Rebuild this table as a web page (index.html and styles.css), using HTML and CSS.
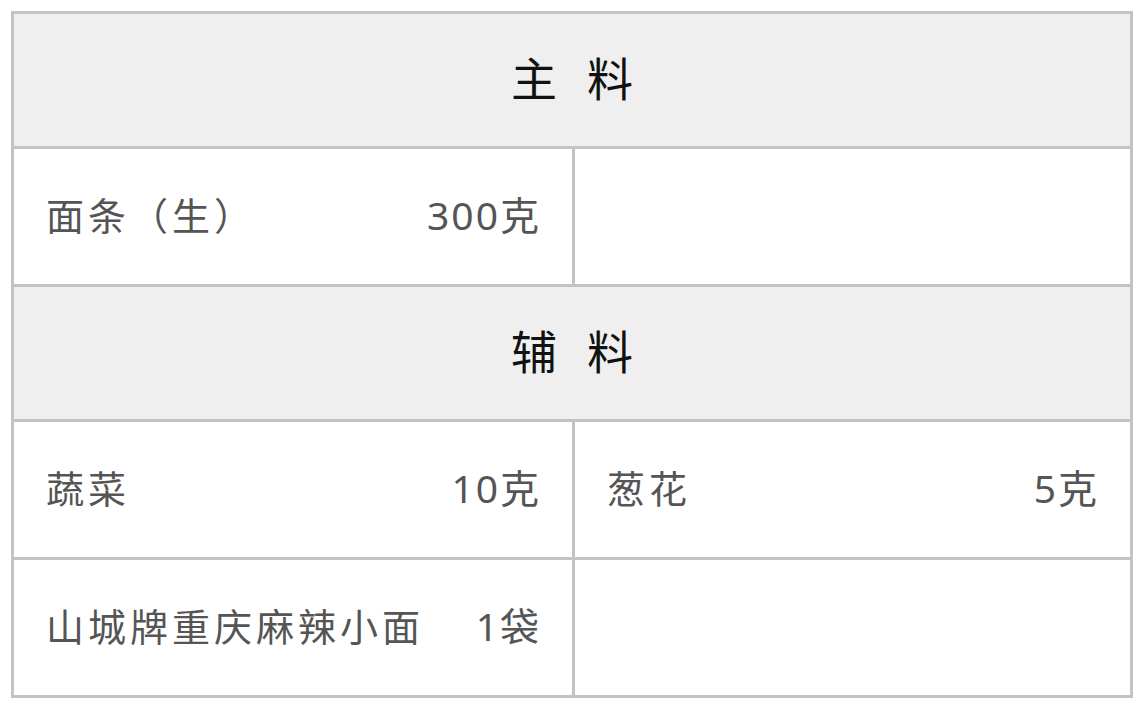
FILE: index.html
```html
<!DOCTYPE html>
<html lang="zh-CN">
<head>
<meta charset="utf-8">
<title>食材</title>
<link rel="stylesheet" href="styles.css">
</head>
<body>
<div class="table">
  <div class="head">主 料</div>
  <div class="row">
    <div class="cell"><span class="name">面条（生）</span><span class="qty">300克</span></div>
    <div class="cell"></div>
  </div>
  <div class="head">辅 料</div>
  <div class="row">
    <div class="cell"><span class="name">蔬菜</span><span class="qty">10克</span></div>
    <div class="cell"><span class="name">葱花</span><span class="qty">5克</span></div>
  </div>
  <div class="row">
    <div class="cell"><span class="name">山城牌重庆麻辣小面</span><span class="qty">1袋</span></div>
    <div class="cell"></div>
  </div>
</div>
</body>
</html>
```

FILE: styles.css
```css
html, body {
  margin: 0;
  padding: 0;
  background: #ffffff;
}
body {
  padding: 11px 13px 0 11px;
  font-family: "Noto Sans", "Noto Sans CJK SC", sans-serif;
}
.table {
  width: 1116px;
  border: 3px solid #c3c3c3;
  display: flex;
  flex-direction: column;
}
.head {
  height: 123px;
  padding-bottom: 9px;
  background: #efefef;
  color: #111111;
  font-size: 46px;
  letter-spacing: 9px;
  text-indent: 9px;
  display: flex;
  align-items: center;
  justify-content: center;
}
.row {
  height: 135px;
  display: grid;
  grid-template-columns: 1fr 1fr;
  border-top: 3px solid #c3c3c3;
}
.row + .head {
  border-top: 3px solid #c3c3c3;
}
.cell {
  display: flex;
  align-items: center;
  justify-content: space-between;
  padding: 0 33px 7px 32px;
  color: #555555;
  font-size: 38px;
  letter-spacing: 4px;
}
.cell + .cell {
  border-left: 3px solid #c3c3c3;
}
.qty {
  font-size: 39px;
  letter-spacing: 2px;
  margin-right: -2px;
}
```
